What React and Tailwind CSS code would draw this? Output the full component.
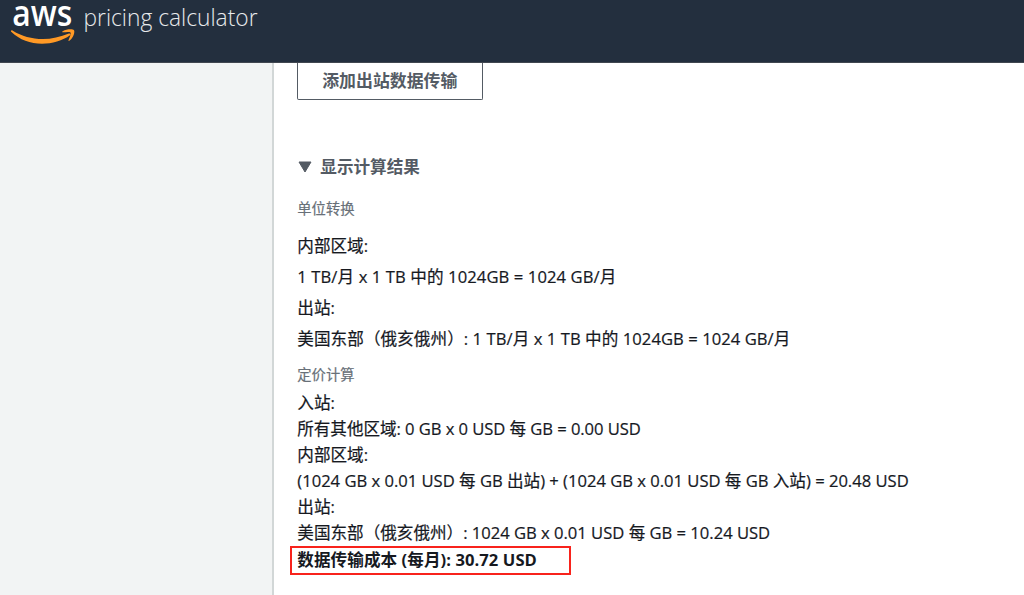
const unitLines = [
  { text: '内部区域:', spacing: 'tracking-normal' },
  { text: '1 TB/月 x 1 TB 中的 1024GB = 1024 GB/月', spacing: 'tracking-[0.1px]' },
  { text: '出站:', spacing: 'tracking-normal' },
  { text: '美国东部（俄亥俄州）: 1 TB/月 x 1 TB 中的 1024GB = 1024 GB/月', spacing: 'tracking-[0.06px]' },
]

const priceLines = [
  { text: '入站:', spacing: 'tracking-normal' },
  { text: '所有其他区域: 0 GB x 0 USD 每 GB = 0.00 USD', spacing: 'tracking-[-0.06px]' },
  { text: '内部区域:', spacing: 'tracking-normal' },
  { text: '(1024 GB x 0.01 USD 每 GB 出站) + (1024 GB x 0.01 USD 每 GB 入站) = 20.48 USD', spacing: 'tracking-[-0.01px]' },
  { text: '出站:', spacing: 'tracking-normal' },
  { text: '美国东部（俄亥俄州）: 1024 GB x 0.01 USD 每 GB = 10.24 USD', spacing: 'tracking-[-0.01px]' },
]

function Logo() {
  return (
    <svg width="270" height="62" viewBox="0 0 270 62" className="block" fontFamily="'Open Sans', sans-serif">
      <text x="12.3" y="25.8" fontSize="36" fontWeight="600" fill="#fff" textLength="60" lengthAdjust="spacingAndGlyphs">aws</text>
      <path d="M11.3 30.4c-.6.5-.4 1 .2 1.6C19.5 39.8 30.5 43.7 42 43.7c10 0 20.800-3.200 28-8.500 1.200-.9.200-2.200-1.100-1.700C60.500 37 51.500 39 43 39c-11 0-21.500-3-30.200-8.300-.6-.4-1.100-.6-1.500-.3z" fill="#ff9925" />
      <path d="M74 30.200c-1-1.300-7.500-1.300-11.300 1-.8.500-.6 1.200.2 1.100 2.800-.3 6.800-.8 7.600.2.800.9-.8 4.800-1.900 7.500-.4 1 .3 1.300 1.100.6 4.100-3.200 5.300-9.200 4.300-10.400z" fill="#ff9925" />
      <text x="83.500" y="26.300" fontSize="24.500" fontWeight="300" fill="#e8eaec" textLength="174" lengthAdjust="spacingAndGlyphs">pricing calculator</text>
    </svg>
  )
}

export default function App() {
  return (
    <div className="flex h-[595px] w-[1024px] flex-col overflow-hidden bg-white font-['Open_Sans','Noto_Sans_CJK_SC',sans-serif] text-[#16191f]">
      <header className="h-[63px] shrink-0 border-b border-[#414750] bg-[#232f3e]">
        <Logo />
      </header>

      <div className="flex min-h-0 flex-1">
        <aside className="w-[274px] shrink-0 border-r-2 border-[#d2d7d7] bg-[#f2f4f4]" />

        <main className="flex flex-1 flex-col items-start pl-[23.3px] whitespace-nowrap">
          <button className="h-[37px] w-[186px] rounded-b-[2px] border border-t-0 border-[#545b64] pr-px text-[16.900px] font-bold text-[#545b64]">
            添加出站数据传输
          </button>

          <h3 className="mt-[55px] flex h-6 items-center gap-2 pl-px text-[16.600px] font-bold text-[#545b64]">
            <svg width="14" height="12" viewBox="0 0 14 12">
              <path d="M1 1h12L7 11z" fill="#545b64" stroke="#545b64" strokeLinejoin="round" />
            </svg>
            显示计算结果
          </h3>

          {/* Unit conversions */}
          <div className="mt-5 h-5 text-[14.300px] leading-5 text-[#687078] [-webkit-text-stroke:0.2px]">单位转换</div>
          <div className="mt-[11px] text-[16.600px] leading-[31px] [-webkit-text-stroke:0.2px]">
            {unitLines.map((line, i) => (
              <p key={i}><span className={line.spacing}>{line.text}</span></p>
            ))}
          </div>

          {/* Pricing calculations */}
          <div className="mt-[11px] h-5 text-[14.300px] leading-5 text-[#687078] [-webkit-text-stroke:0.2px]">定价计算</div>
          <div className="mt-[5px] text-[16.600px] leading-[26.100px] [-webkit-text-stroke:0.2px]">
            {priceLines.map((line, i) => (
              <p key={i}><span className={line.spacing}>{line.text}</span></p>
            ))}
          </div>
          <p className="-mt-px -ml-[7.300px] h-[29px] w-[280.500px] border-2 border-[#f8231c] pl-[5.300px] text-[16.600px] leading-[23px] font-bold">
            <span className="tracking-[0.06px]">数据传输成本 (每月): 30.72 USD</span>
          </p>
        </main>
      </div>
    </div>
  )
}
